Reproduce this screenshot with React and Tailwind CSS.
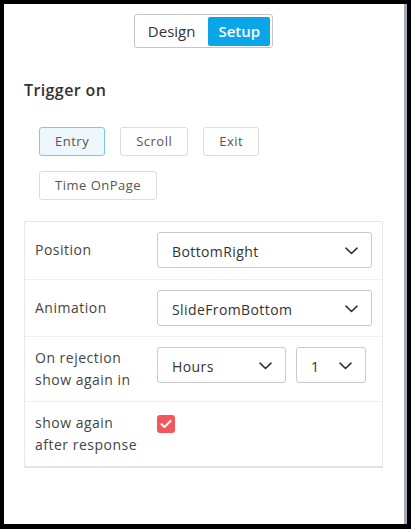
import React from "react";

function Chevron() {
  return (
    <svg width="13" height="8" viewBox="0 0 13 8" fill="none" className="shrink-0 mt-[1px]">
      <path d="M1 1.2 L6.5 6.5 L12 1.2" stroke="#333" strokeWidth="1.6" strokeLinecap="round" strokeLinejoin="round" />
    </svg>
  );
}

function Select({ value, className }) {
  return (
    <div className={"h-[36px] border border-[#c9c9c9] rounded-[3px] flex items-center justify-between pl-[14px] pr-[13px] bg-white " + className}>
      <span className="text-[14px] text-[#333] tracking-[0.4px] pt-[3px]">{value}</span>
      <Chevron />
    </div>
  );
}

function Btn({ label, active }) {
  return (
    <div
      className={
        "h-[29px] px-[15px] flex items-center rounded-[3px] border text-[13px] tracking-[0.5px] text-[#555] " +
        (active ? "border-[#7cc8ec] bg-[#eef7fd]" : "border-[#dcdcdc] bg-white")
      }
    >
      {label}
    </div>
  );
}

export default function App() {
  return (
    <div
      className="w-[411px] h-[529px] bg-black pt-[4px] pl-[4px] pr-[4px] pb-[5px] flex"
      style={{ fontFamily: '"Open Sans", "Noto Sans", sans-serif' }}
    >
      <div className="flex-1 bg-white border-r-[3px] border-[#a3aabb] flex flex-col pl-[20px] pr-[21px] pt-[10px]">
        <div className="flex justify-center">
          <div className="flex items-center border border-[#c6c6c6] rounded-[3px] p-[2px] h-[34px]">
            <div className="pl-[11px] pr-[13px] text-[15px] text-[#333] leading-[29px]">Design</div>
            <div className="px-[10px] text-[15px] text-white font-semibold leading-[29px] bg-[#0ba5ea] rounded-[2px] h-[29px]">Setup</div>
          </div>
        </div>

        <div className="mt-[32px] text-[16px] font-semibold text-[#333] leading-[20px] tracking-[0.4px]">Trigger on</div>

        <div className="ml-[15px] mt-[27px] flex flex-wrap gap-x-[15px] gap-y-[15px] w-[250px]">
          <Btn label="Entry" active />
          <Btn label="Scroll" />
          <Btn label="Exit" />
          <Btn label="Time OnPage" />
        </div>

        <div className="mt-[21px] border border-[#e6e6e6] border-b-2 border-b-[#e3e3e3] text-[14px] text-[#444] leading-[22px] tracking-[0.5px]">
          <div className="flex items-center px-[10px] pt-[10px] pb-[11px]">
            <div className="w-[122px] shrink-0">Position</div>
            <Select value="BottomRight" className="flex-1" />
          </div>
          <div className="flex items-center px-[10px] pt-[10px] pb-[10px] border-t border-[#efefef]">
            <div className="w-[122px] shrink-0">Animation</div>
            <Select value="SlideFromBottom" className="flex-1" />
          </div>
          <div className="flex items-start px-[10px] pt-[10px] pb-[10px] border-t border-[#efefef]">
            <div className="w-[122px] shrink-0">
              On rejection
              <br />
              show again in
            </div>
            <div className="flex gap-[10px]">
              <Select value="Hours" className="w-[129px]" />
              <Select value="1" className="w-[70px]" />
            </div>
          </div>
          <div className="flex items-start px-[10px] pt-[10px] pb-[10px] border-t border-[#efefef]">
            <div className="w-[122px] shrink-0">
              show again
              <br />
              after response
            </div>
            <div className="mt-[3px] w-[18px] h-[18px] rounded-[3px] bg-[#f4575a] flex items-center justify-center">
              <svg width="12" height="10" viewBox="0 0 12 10" fill="none">
                <path d="M1.5 5.2 L4.5 8 L10.5 2" stroke="white" strokeWidth="2" strokeLinecap="round" strokeLinejoin="round" />
              </svg>
            </div>
          </div>
        </div>
      </div>
    </div>
  );
}
